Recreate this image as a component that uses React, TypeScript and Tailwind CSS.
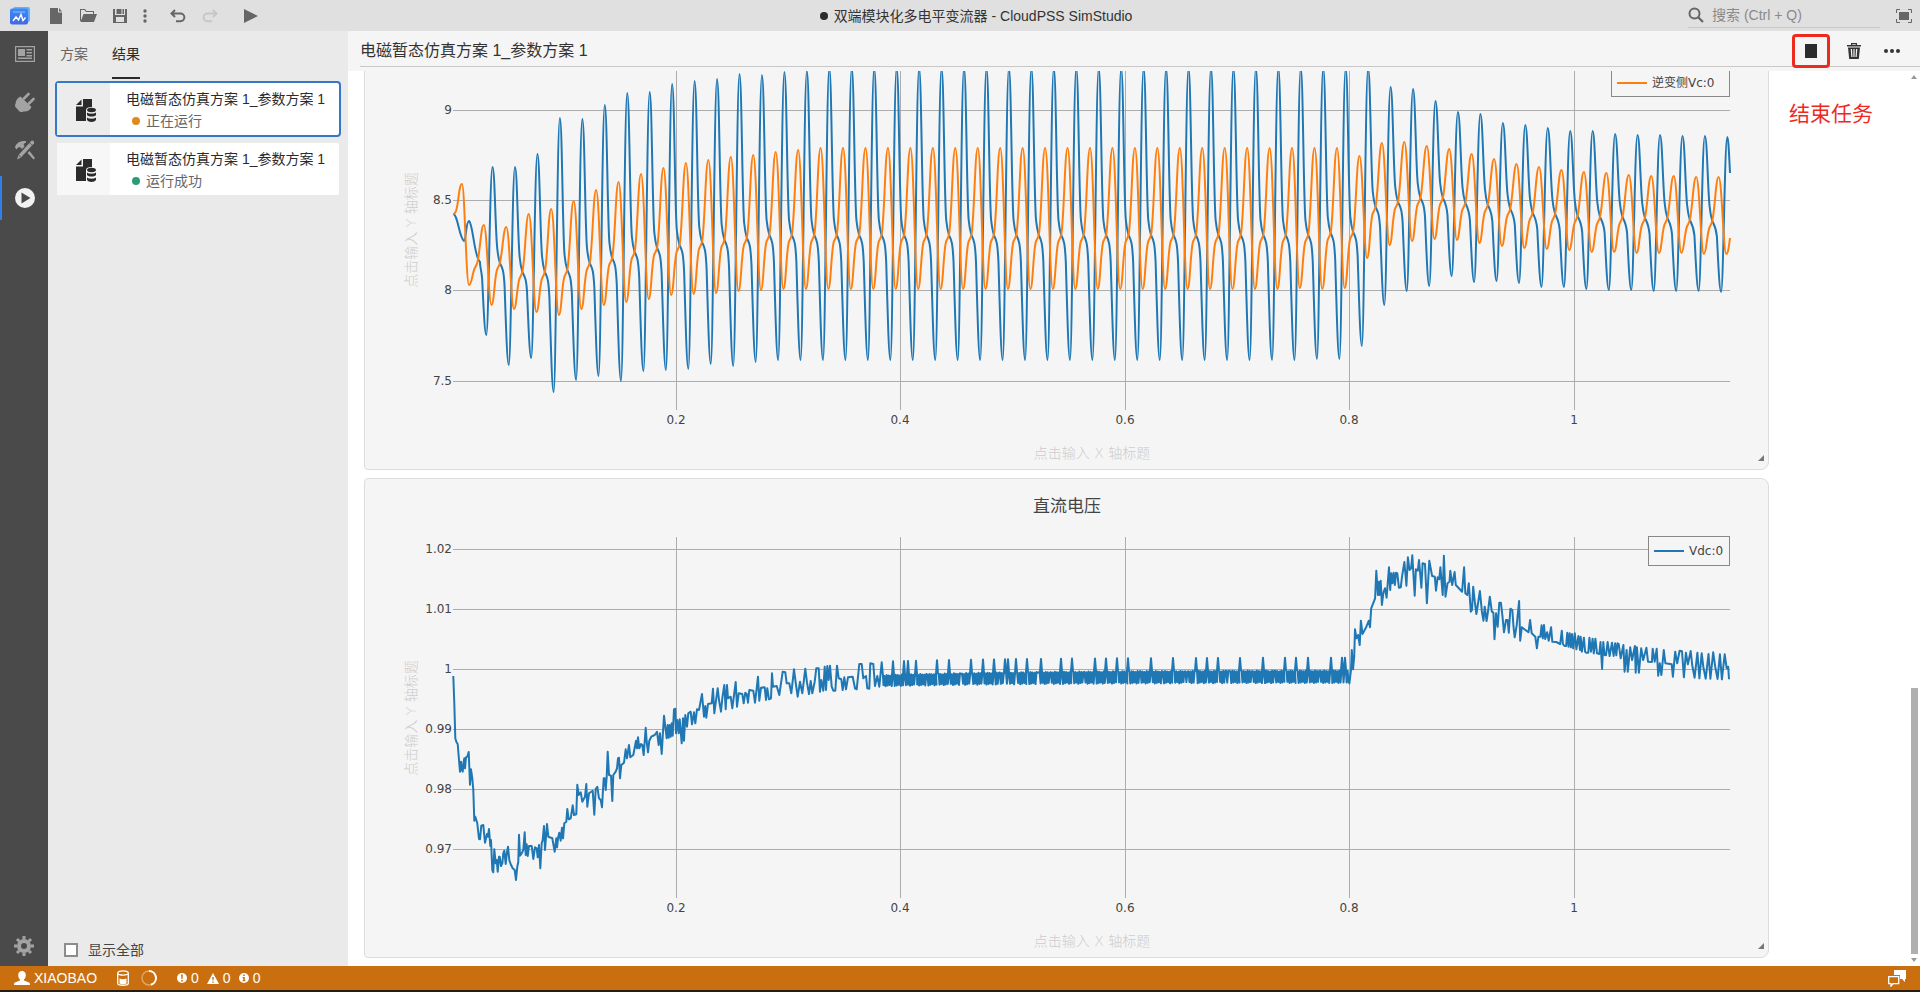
import type { ReactNode } from 'react';

type Point = [number, number];

const BLUE = '#1f77b4';
const ORANGE = '#ff7f0e';

// Plot area inside a chart card
const PLOT = { left: 88, right: 1365, top: 58, bottom: 419 };

const X_TICKS = [
  { label: '0.2', x: 311 },
  { label: '0.4', x: 535 },
  { label: '0.6', x: 760 },
  { label: '0.8', x: 984 },
  { label: '1', x: 1209 },
];

/* ---------- capacitor voltage waveforms ---------- */

const PERIOD = 22.451;
const FIRST_PEAK = 127.5;
const LAST = 55;

const fill = (value: number, count: number) => Array<number>(count).fill(value);

const vcBlue = {
  peaks: [
    176, 176, 163, 127, 128, 114, 102, 101, 93, 90, 88, 83, 84, 81, 80, ...fill(77, 25),
    96, 98, 110, 121, 123, 132, 134, 137, 140, 140, 143, 144, 144, 145, 145, 146,
  ],
  troughs: [
    344, 374, 367, 401, 389, 385, 390, 380, 379, 378, 373, 375, 371, ...fill(369, 24),
    368, 368, 355, 314, 300, 295, 285, 291, 290, 292, 296, 296, 298, 299, 299, 300, 300, 300, 301,
  ],
};

// Values for the cycle before the first full peak come first
const knees = [
  271, 272, 281, 281, 279, 272, 267, 261, 257, 254, 251, 249, 247, ...fill(244, 24),
  244, 242, 241, 216, 211, 207, 207, 212, 214, 218, 222, 223, 225, 226, 226, 227, 227, 229, 230,
];

const vcOrange = {
  peaks: [
    193, 234, 236, 223, 218, 210, 199, 191, 183, 177, 172, 169, 166, 164, 161, 159, ...fill(157, 22),
    157, 157, 165, 152, 151, 155, 158, 163, 168, 173, 176, 179, 181, 182, 184, 185, 185, 186, 186,
  ],
  troughs: [
    294, 314, 318, 321, 324, 318, 314, 311, 308, 304, 303, 302, 300, 299, ...fill(298, 23),
    297, 298, 297, 267, 254, 250, 248, 249, 252, 255, 257, 258, 259, 261, 261, 262, 262, 262, 263, 263,
  ],
};

function bluePath() {
  let d = 'M88 223C93 223 94 247 99 250C101 250 101 230 104 230C108 232 109 266 115 271';
  for (let k = 0; k <= LAST; k++) {
    const x = FIRST_PEAK + k * PERIOD;
    const peak = vcBlue.peaks[k];
    const trough = vcBlue.troughs[k];
    const before = knees[k];
    const mid = before + (trough - before) * 0.22;
    const steep = before + (trough - before) * 0.6;
    // short ledge after the knee, then the steep fall into the trough
    d += `C${x - 12.6} ${before + 5} ${x - 11.4} ${before + 6} ${x - 10.4} ${mid}`;
    d += `C${x - 9} ${steep} ${x - 7.8} ${trough} ${x - 6.2} ${trough}`;
    d += `C${x - 4} ${trough} ${x - 2.6} ${peak} ${x} ${peak}`;
    if (k < LAST) {
      const knee = knees[k + 1];
      d += `C${x + 2.2} ${peak} ${x + 2.8} ${knee - 34} ${x + 4.7} ${knee - 15}`;
      d += `C${x + 5.3} ${knee - 9} ${x + 6.2} ${knee - 4} ${x + 7.4} ${knee}`;
    }
  }
  return d + 'C1363.4 146 1364.2 166 1365 182';
}

function orangePath() {
  let d = 'M88 223C94 224 93 193 97 193';
  for (let i = 0; i <= LAST + 1; i++) {
    const x = FIRST_PEAK + (i - 1) * PERIOD;
    const trough = vcOrange.troughs[i];
    d += `C${x - 5.4} ${vcOrange.peaks[i]} ${x - 4} ${trough} ${x - 1} ${trough}`;
    if (i <= LAST) {
      const knee = knees[i];
      const next = vcOrange.peaks[i + 1];
      d += `C${x + 1.6} ${trough} ${x + 2} ${knee + 12} ${x + 4.8} ${knee + 6}`;
      d += `C${x + 5.8} ${knee + 4} ${x + 6.6} ${knee + 3} ${x + 7.4} ${knee}`;
      d += `C${x + 10.2} ${knee - 12} ${x + 11} ${next} ${x + 13.8} ${next}`;
    }
  }
  return d + 'C1363 263 1364 255 1365 247';
}

/* ---------- DC voltage trace ---------- */

const START_UP = `310,618 313,700 316,805 319,815 323,822 327,870 330,905 333,875 336,900 338,905 341,875 343,865
345,895 348,862 352,860 356,846 360,944 363,898 367,925 370,960 373,1052 376,1040 382,1060 387,1107 390,1108
394,1067 400,1065 405,1118 411,1092 414,1100 417,1077 421,1128 423,1110 427,1200 430,1207 433,1138 437,1180
440,1170 443,1205 447,1160 449,1160 453,1188 457,1180 460,1150 463,1142 467,1182 471,1145 474,1130 478,1170
482,1183 488,1195 494,1200 498,1230 502,1190 505,1175 507,1094 510,1157 515,1150 520,1140 524,1087 527,1155
530,1123 533,1158 537,1128 545,1128 550,1167 555,1132 560,1135 563,1162 567,1125 571,1195 575,1120 578,1110
582,1068 585,1140 591,1062 595,1100 607,1105 614,1145 619,1105 621,1132 625,1100 628,1088 632,1112 636,1073
639,1105 643,1060 649,1055 652,1017 656,1048 662,1045 668,1006 672,1035 679,1033 682,944 686,975 692,967
697,995 705,980 709,942 712,1010 717,970 728,962 733,1034 737,957 742,950 747,985 752,990 756,1012 761,925
764,925 767,960 770,920 773,845 777,915 783,917 787,993 790,915 797,905 801,895 804,865 807,863 810,925
814,885 822,878 827,838 831,865 837,825 841,862 850,855 858,812 861,835 864,802 868,835 873,822 877,825
881,855 887,773 890,815 894,847 898,812 904,800 914,795 921,785 926,825 930,790 935,852 938,800 942,737
946,770 950,805 953,765 956,803 959,765 962,800 965,760 968,797 972,718 976,716 978,790 982,750 986,790
989,748 995,820 999,745 1002,812 1006,735 1011,770 1015,730 1022,725 1026,763 1032,727 1036,760 1041,718
1047,720 1056,672 1062,740 1066,708 1069,743 1074,702 1085,700 1089,656 1093,730 1098,692 1103,655 1107,690
1113,725 1117,685 1123,645 1127,718 1131,645 1134,685 1142,680 1147,715 1157,636 1161,710 1166,670 1177,672
1181,700 1186,668 1190,672 1194,698 1198,660 1210,662 1215,698 1220,655 1224,620 1228,692 1233,653 1244,652
1248,690 1252,655 1257,688`;

const SETTLING = `93,205 96,130 99,170 110,168 118,195 128,125 136,127 140,160 148,160 154,190 162,118 168,165
173,200 180,155 187,190 196,116 201,158 207,192 212,153 217,190 224,155 229,115 236,115 240,185 244,150
250,182 254,110 258,180 262,108 266,150 270,107 275,170 280,182 286,182 291,107 296,145 304,148 308,180
313,142 318,178 324,142 338,140 345,175 350,178 358,102 365,102 370,145 378,138 382,175 388,176 391,100
400,102 405,168 412,138 418,170 425,97 429,138`;

const OVERSHOOT = `125,640 129,600 131,540 134,598 137,560 139,478 143,505 147,495 151,525 154,452 158,492 168,470
174,452 177,472 180,415 190,385 193,302 197,375 199,335 201,375 204,332 207,405 211,368 215,355 219,383
225,292 228,360 231,310 234,340 237,308 240,345 243,308 246,310 250,353 255,352 258,320 264,276 269,347
273,262 277,300 281,295 284,256 290,377 293,298 298,302 301,270 307,353 310,280 316,282 321,400 327,272
334,318 341,320 344,362 348,322 352,328 355,292 361,375 364,257 368,380 373,340 378,335 380,302 385,345
391,306 394,345 410,365 415,292 418,370 423,375 427,340 432,425 435,420 438,350 442,395 446,432 455,363
460,425 464,452 467,410 472,453 476,420 480,380 485,425 489,428 492,508 496,430 500,470 504,398 508,398
512,440 516,487 521,450 525,450 528,488 532,416 537,420 540,470 543,502 548,466 554,393 557,512 561,472
570,480 578,487 582,450 586,490 595,500 599,535 603,500 608,500 611,466 614,505 617,465 620,507 625,487
629,512 635,472 638,515 648,516 658,522 662,482 665,522 669,528 673,528 676,488 679,530 682,490 685,532
688,492 691,535 695,490 699,538 704,498 708,540 710,500 713,545 718,503 721,545 724,548 729,548 732,503
736,545 740,506 743,550 747,506 751,550 757,552 760,516 764,597 767,516 770,555 774,556 778,516 783,558
789,518 793,558 797,520 800,556 803,520 806,522 811,565 818,525 821,605 826,540 829,605 835,532 840,570
847,528 849,608 852,532 857,608 863,535 868,570 876,533 880,575 890,576 892,536 897,575 902,536 906,617
910,580 914,615 920,540 924,580 940,583 943,620 949,545 954,580 960,542 966,544 971,622 976,548 981,583
988,543 992,585 998,623 1005,548 1010,625 1016,550 1020,590 1026,626 1033,552 1038,626 1045,547 1050,590
1056,627 1062,553 1067,628 1074,553 1079,595 1083,590 1085,628`;

const SPIKES = [
  528, 539, 543, 551, 572, 584, 606, 618, 629, 640, 643, 651, 662, 676, 696, 707, 730, 741, 752, 763, 786, 808,
  831, 842, 853, 875, 898, 920, 931, 943, 966, 977, 980,
];

function segment(samples: string, x0: number, y0: number, scale: number): Point[] {
  return samples.split(/\s+/).map((pair) => {
    const [x, y] = pair.split(',').map(Number);
    return [x0 + x / scale, y0 + y / 3];
  });
}

// Switching ripple just below the rated voltage, with a spike now and then
function steadyState(): Point[] {
  const points: Point[] = [];
  let next = 0;
  let low = false;
  for (let x = 518.5, i = 0; x < 984; x += 1.02, i++) {
    const drift = 5 * Math.exp(-(x - 518) / 150);
    const top = 191.2 + drift;
    if (next < SPIKES.length && x >= SPIKES[next]) {
      points.push([SPIKES[next] - 1, top], [SPIKES[next], 178.5 + drift * 0.8], [SPIKES[next] + 1, top]);
      next++;
      low = false;
      continue;
    }
    const flat = i % 11 > 8 || i % 37 === 3;
    low = !low && !flat;
    points.push([x, low ? 202.6 + drift * 0.7 + ((i * 7) % 3) * 0.6 : top + ((i * 5) % 3) * 0.4]);
  }
  return points;
}

const vdcPoints = [
  ...segment(START_UP, -15, -9, 3),
  ...segment(SETTLING, 375, 151, 3),
  ...steadyState(),
  ...segment(OVERSHOOT, 935, -9, 2.529),
]
  .map(([x, y]) => `${x.toFixed(1)},${y.toFixed(1)}`)
  .join(' ');

/* ---------- chart ---------- */

interface ChartProps {
  title?: string;
  yTicks: { label: string; y: number }[];
  children: ReactNode;
}

function Chart({ title, yTicks, children }: ChartProps) {
  return (
    <section className="relative shrink-0 rounded-l-sm rounded-r-lg border border-[#dcdcdc] bg-[#f5f5f5]">
      <svg
        viewBox="0 0 1403 478"
        className="block w-full font-['DejaVu_Sans','Noto_Sans_CJK_SC',sans-serif] text-[12px]"
        fill="#444"
      >
        {title && (
          <text x="702" y="33" textAnchor="middle" className="text-[17px]">
            {title}
          </text>
        )}
        <g stroke="#adadad" shapeRendering="crispEdges">
          {X_TICKS.map((tick) => (
            <line key={tick.label} x1={tick.x} x2={tick.x} y1={PLOT.top} y2={PLOT.bottom} />
          ))}
          {yTicks.map((tick) => (
            <line key={tick.label} x1={PLOT.left} x2={PLOT.right} y1={tick.y} y2={tick.y} />
          ))}
        </g>
        {X_TICKS.map((tick) => (
          <text key={tick.label} x={tick.x} y="433" textAnchor="middle">
            {tick.label}
          </text>
        ))}
        {yTicks.map((tick) => (
          <text key={tick.label} x="87" y={tick.y + 4} textAnchor="end">
            {tick.label}
          </text>
        ))}
        <g fill="#ccc" textAnchor="middle" className="text-[14px] font-light">
          <text x="727" y="467">点击输入 X 轴标题</text>
          <text transform="translate(51 239) rotate(-90)">点击输入 Y 轴标题</text>
        </g>
        {children}
      </svg>
      <svg viewBox="0 0 6 6" className="absolute right-1 bottom-2 size-1.5" fill="#777">
        <path d="M6 0v6H0z" />
      </svg>
    </section>
  );
}

/* ---------- icons ---------- */

interface IconProps {
  className?: string;
  box?: string;
  children: ReactNode;
}

function Icon({ className = 'size-5', box = '0 0 20 20', children }: IconProps) {
  return (
    <svg viewBox={box} className={`${className} shrink-0`} fill="currentColor" aria-hidden="true">
      {children}
    </svg>
  );
}

function Logo() {
  return (
    <Icon>
      <defs>
        <linearGradient id="logo" x1="0" y1="0" x2="0" y2="1">
          <stop offset="0" stopColor="#3d8bf5" />
          <stop offset="1" stopColor="#4368e0" />
        </linearGradient>
      </defs>
      <rect x="3" y="1" width="17" height="15" rx="2" fill="#62b2fb" />
      <rect x="0" y="2.5" width="18" height="16" rx="2" fill="url(#logo)" />
      <path d="M3 6h12" stroke="#8fc0ff" />
      <path d="m3 15 3-4 2.5 3L11 8.5l2 6 2.5-3" stroke="#fff" strokeWidth="1.4" fill="none" />
    </Icon>
  );
}

const toolbar = [
  {
    label: '新建',
    className: 'ml-5 w-3',
    box: '0 0 12 16',
    icon: <path d="M0 0h8v4.5h4V16H0zM9 0l3 3.5H9z" />,
  },
  {
    label: '打开',
    className: 'ml-[18px] w-[17px]',
    box: '0 0 17 16',
    icon: (
      <>
        <path d="M0 1h5l1.5 2H14v3h-1V4H6L4.5 2H1v11H0z" />
        <path d="M3.5 6H17l-3 8H.5z" />
      </>
    ),
  },
  {
    label: '保存',
    className: 'ml-4 w-3.5',
    box: '0 0 14 16',
    icon: <path fillRule="evenodd" d="M0 1h2v6h10V1h2v14H0zM3.5 1h5v5h-5zM9.5 1H11v5H9.5zM3 9h8v5H3z" />,
  },
  {
    label: '更多',
    className: 'ml-4 w-1',
    box: '0 0 4 16',
    icon: (
      <>
        <circle cx="2" cy="3" r="1.7" />
        <circle cx="2" cy="8" r="1.7" />
        <circle cx="2" cy="13" r="1.7" />
      </>
    ),
  },
];

const undoPath = 'M5 2 1.5 5.5 5 9M2 5.5h8.5a3.8 3.8 0 0 1 0 7.7H6';

const sidebar = [
  {
    label: '概要',
    icon: (
      <>
        <path fillRule="evenodd" d="M0 2h20v16H0zM1.2 3.2v13.6h17.6V3.2z" />
        <path d="M3 5h7v7H3zM11.5 5H17v1.5h-5.5zM11.5 8H17v1.5h-5.5zM11.5 11H17v1.5h-5.5zM3 13.5h14V15H3z" />
      </>
    ),
  },
  {
    label: '实现',
    icon: (
      <>
        <path d="M5.5 4.5 16.5 15c-1.500 3.500-4.500 5-8 4.500-1 .8-3 .8-4 0l-4-4.500c-.8-1-.8-2 0-3C.5 8.500 2.500 6 5.500 4.500z" />
        <path d="m9 6.500 4.500-4.500M14 11.500l4.500-4.500" stroke="currentColor" strokeWidth="2.6" strokeLinecap="round" />
      </>
    ),
  },
  {
    label: '工具',
    icon: (
      <>
        <path d="M0 7.500C1 3 5 .5 11 1v1.500L8.500 4l1 2.500L7 9 5 7l-2 .5L1.500 9.500zM12.500 13l2-2 5.500 7-1.500 1.500z" />
        <path d="M16.500.8c1.200-.8 3.200 1 2.500 2.400L6 17.500 2 19.500 3.500 15z" />
        <path d="m14.500 2.800 2.700 2.700M3.500 15 6 17.500" stroke="#4a4a4a" strokeWidth=".8" />
      </>
    ),
  },
  {
    label: '运行',
    active: true,
    icon: <path fillRule="evenodd" d="M10 0a10 10 0 1 0 0 20 10 10 0 0 0 0-20zM6.500 4.500l9 5.500-9 5.500z" />,
  },
];

const results = [
  { id: 1, name: '电磁暂态仿真方案 1_参数方案 1', status: '正在运行', dot: 'bg-[#e08a1e]', selected: true },
  { id: 2, name: '电磁暂态仿真方案 1_参数方案 1', status: '运行成功', dot: 'bg-[#2a9d78]', selected: false },
];

function TitleBar() {
  return (
    <header className="flex h-[31px] items-center bg-[#e0e0e0] text-[#666]">
      <div className="flex w-66 shrink-0 items-center pl-2.5">
        <Logo />
        {toolbar.map((item) => (
          <button key={item.label} aria-label={item.label} className={item.className}>
            <Icon className="h-4 w-full" box={item.box}>
              {item.icon}
            </Icon>
          </button>
        ))}
        <button aria-label="撤销" className="ml-[23px]">
          <Icon className="size-4" box="0 0 16 16">
            <path d={undoPath} fill="none" stroke="currentColor" strokeWidth="2" />
          </Icon>
        </button>
        <button aria-label="重做" disabled className="ml-4 text-[#c6c6c6]">
          <Icon className="size-4 -scale-x-100" box="0 0 16 16">
            <path d={undoPath} fill="none" stroke="currentColor" strokeWidth="2" />
          </Icon>
        </button>
        <button aria-label="运行" className="ml-[26px]">
          <Icon className="h-3.5 w-3.5" box="0 0 14 14">
            <path d="M0 0v14l14-7z" />
          </Icon>
        </button>
      </div>
      <div className="flex min-w-0 flex-1 items-center justify-center gap-1.5 text-[#333]">
        <span className="size-2 rounded-full bg-[#2b2b2b]" />
        <h1>双端模块化多电平变流器 - CloudPSS SimStudio</h1>
      </div>
      <div className="flex w-[232px] shrink-0 items-center justify-between pr-2">
        <label className="flex w-48 items-center gap-2 border-b border-[#c8c8c8]">
          <Icon className="size-4" box="0 0 16 16">
            <circle cx="6.500" cy="6.500" r="5" fill="none" stroke="currentColor" strokeWidth="2" />
            <path d="m10 10 5 5" stroke="currentColor" strokeWidth="2.2" />
          </Icon>
          <input
            type="search"
            aria-label="搜索"
            placeholder="搜索 (Ctrl + Q)"
            className="h-6 w-full bg-transparent outline-none placeholder:text-[#8a8a8a]"
          />
        </label>
        <button aria-label="全屏">
          <Icon className="size-4" box="0 0 16 16">
            <path d="M.5 5V1.500H4M12 1.500h3.500V5M15.500 11v3.500H12M4 14.500H.5V11" fill="none" stroke="currentColor" />
            <path d="M3 4h10v8H3z" />
          </Icon>
        </button>
      </div>
    </header>
  );
}

function Sidebar() {
  return (
    <nav className="flex w-12 shrink-0 flex-col gap-1 bg-[#4a4a4a] pt-px text-[#a3a3a3]">
      {sidebar.map((item) => (
        <button
          key={item.label}
          aria-label={item.label}
          className={`flex h-11 items-center justify-center border-l-2 ${
            item.active ? 'border-[#2f80ed] text-[#f2f2f2]' : 'border-transparent'
          }`}
        >
          <Icon>{item.icon}</Icon>
        </button>
      ))}
      <button aria-label="设置" className="mt-auto flex h-10 items-center justify-center">
        <Icon>
          <circle cx="10" cy="10" r="5" fill="none" stroke="currentColor" strokeWidth="4" />
          <g stroke="currentColor" strokeWidth="3">
            <path d="M10 0v3M10 17v3M0 10h3M17 10h3M3 3l2.200 2.200M14.800 14.800 17 17M17 3l-2.200 2.200M5.200 14.800 3 17" />
          </g>
        </Icon>
      </button>
    </nav>
  );
}

function ResultPanel() {
  return (
    <aside className="flex w-75 shrink-0 flex-col bg-[#eaeaea]">
      <div role="tablist" className="flex h-12 gap-6 px-3 text-[#666]">
        <button role="tab" className="border-b-2 border-transparent">
          方案
        </button>
        <button role="tab" aria-selected="true" className="border-b-2 border-[#2b2b2b] text-[#2b2b2b]">
          结果
        </button>
      </div>
      <ul className="mt-0.5 flex flex-1 flex-col gap-1 px-[7px]">
        {results.map((result) => (
          <li
            key={result.id}
            className={`flex h-14 rounded border-2 bg-clip-padding bg-white ${
              result.selected ? 'border-[#3579c6]' : 'border-transparent'
            }`}
          >
            <div
              className={`flex w-[53px] items-center justify-center pt-1 pl-1 text-[#2b2b2b] ${
                result.selected ? 'bg-[#ececec]' : 'bg-[#f7f7f7]'
              }`}
            >
              <Icon className="h-6 w-5" box="0 0 20 24">
                <path d="M7 0h9v8c-4 0-6 1-6 3v11H0V7.500h7zM5.500.5V6H0z" />
                <path d="M11 11c0-3 9-3 9 0s-9 3-9 0zM11 13.500c2 1.600 7 1.600 9 0V16c-1.500 2-7.500 2-9 0zM11 18.500c2 1.600 7 1.600 9 0V21c-1.500 2.500-7.500 2.500-9 0z" />
              </Icon>
            </div>
            <div className="min-w-0 flex-1 pt-[5px] pl-4 leading-[22px]">
              <p className="truncate text-[#2b2b2b]">{result.name}</p>
              <p className="flex items-center gap-1.5 pl-1.5 text-[#666]">
                <span className={`size-2 rounded-full ${result.dot}`} />
                {result.status}
              </p>
            </div>
          </li>
        ))}
      </ul>
      <label className="flex h-8 items-center gap-2.5 px-4 text-[#444]">
        <input type="checkbox" className="size-3.5 appearance-none border-2 border-[#8c8c8c] bg-white" />
        显示全部
      </label>
    </aside>
  );
}

function ResultView() {
  return (
    <main className="relative flex min-w-0 flex-1 flex-col bg-white">
      <div className="h-10 bg-[#f5f5f5] pl-3">
        <div className="flex h-9 items-center border-b border-[#c8c8c8] pt-1 pr-5 text-[#333]">
          <h2 className="flex-1 text-base">电磁暂态仿真方案 1_参数方案 1</h2>
          <button
            aria-label="结束"
            className="flex h-[34px] w-[38px] items-center justify-center rounded border-3 border-[#ee2a1e]"
          >
            <span className="h-3.5 w-3 bg-[#2b2b2b]" />
          </button>
          <button aria-label="删除" className="ml-4 w-4">
            <Icon className="size-4" box="0 0 16 16">
              <path d="M1 2h4V0h6v2h4v1.500H1zM6.200 1.200V2h3.600v-.8z" fillRule="evenodd" />
              <path
                fillRule="evenodd"
                d="M2 4.500h12L12.800 16H3.200zM4.700 6l.6 8h1.200L6 6zM7.400 6v8h1.200V6zM10 6l-.5 8h1.200l.6-8z"
              />
            </Icon>
          </button>
          <button aria-label="更多" className="ml-[22px]">
            <Icon className="size-4" box="0 0 16 16">
              <circle cx="2" cy="8" r="2" />
              <circle cx="8" cy="8" r="2" />
              <circle cx="14" cy="8" r="2" />
            </Icon>
          </button>
        </div>
      </div>

      <div className="flex min-h-0 flex-1">
        <div className="flex min-w-0 flex-1 flex-col justify-end gap-2 overflow-hidden pr-[142px] pb-2 pl-4">
          <Chart
            yTicks={[
              { label: '9', y: 119 },
              { label: '8.5', y: 209 },
              { label: '8', y: 299 },
              { label: '7.5', y: 390 },
            ]}
          >
            <g fill="none" strokeWidth="2" strokeLinejoin="round">
              <path d={bluePath()} stroke={BLUE} />
              <path d={orangePath()} stroke={ORANGE} />
            </g>
            <rect x="1246.5" y="57.5" width="118" height="48" fill="#f5f5f5" stroke="#888" />
            <path d="M1252 92h30" stroke={ORANGE} strokeWidth="2" />
            <text x="1287" y="96">逆变侧Vc:0</text>
          </Chart>
          <Chart
            title="直流电压"
            yTicks={[
              { label: '1.02', y: 70 },
              { label: '1.01', y: 130 },
              { label: '1', y: 190 },
              { label: '0.99', y: 250 },
              { label: '0.98', y: 310 },
              { label: '0.97', y: 370 },
            ]}
          >
            <polyline points={vdcPoints} fill="none" stroke={BLUE} strokeWidth="2" strokeLinejoin="round" />
            <rect x="1283.5" y="57.5" width="81" height="29" fill="#f5f5f5" stroke="#888" />
            <path d="M1289 72h30" stroke={BLUE} strokeWidth="2" />
            <text x="1324" y="76">Vdc:0</text>
          </Chart>
        </div>
        {/* Scrollbar */}
        <div className="flex w-[9px] flex-col pt-1 pb-1 text-[#999]">
          <Icon className="h-1 w-1.5" box="0 0 6 4">
            <path d="M0 4h6L3 0z" />
          </Icon>
          <div className="mt-auto mb-1 h-[30%] w-[7px] bg-[#b0b0b0]" />
          <Icon className="h-1 w-1.5" box="0 0 6 4">
            <path d="M0 0h6L3 4z" />
          </Icon>
        </div>
      </div>

      <p className="absolute top-[67px] right-[47px] text-[21px] leading-8 text-[#ee2a1e]">结束任务</p>
    </main>
  );
}

function StatusBar() {
  return (
    <footer className="flex h-[26px] items-center border-b-2 border-[#241c0e] bg-[#ca6f10] px-3.5 text-white">
      <button className="flex items-center gap-1">
        <Icon className="size-4" box="0 0 16 16">
          <path d="M8 1c2.500 0 3.800 1.800 3.800 4.200 0 1.800-.8 3.300-1.800 4.200v1.100l5 2c.7.3 1 1 1 2.500H0c0-1.500.3-2.200 1-2.500l5-2V9.400C5 8.500 4.200 7 4.200 5.200 4.200 2.800 5.500 1 8 1z" />
        </Icon>
        XIAOBAO
      </button>
      <Icon className="ml-5 h-4 w-3" box="0 0 12 16">
        <path
          d="M.7 3v10.500c0 2.300 10.600 2.300 10.600 0V3M.7 3c0-2.800 10.600-2.800 10.600 0S.7 5.800.7 3z"
          fill="none"
          stroke="currentColor"
          strokeWidth="1.3"
        />
        <path d="M2.500 8.500c2 1 5 1 7 0v5c-2 1-5 1-7 0z" />
      </Icon>
      <Icon className="ml-3 size-4" box="0 0 16 16">
        <circle cx="8" cy="8" r="7" fill="none" stroke="#e0a55f" strokeWidth="1.5" />
        <path d="M8 1a7 7 0 0 1 2 13.700" fill="none" stroke="currentColor" strokeWidth="2" />
      </Icon>
      <span className="ml-5 flex items-center gap-1">
        <Icon className="size-2.5" box="0 0 10 10">
          <circle cx="5" cy="5" r="5" />
          <path d="M4.100 1.500h1.800L5.600 6H4.400zM4.200 7h1.600v1.500H4.200z" fill="#ca6f10" />
        </Icon>
        0
      </span>
      <span className="ml-2 flex items-center gap-1">
        <Icon className="h-[11px] w-3" box="0 0 12 11">
          <path d="m6 0 6 11H0z" />
          <path d="M5.200 4h1.600l-.3 3.500h-1zM5.300 8.500h1.400v1.300H5.300z" fill="#ca6f10" />
        </Icon>
        0
      </span>
      <span className="ml-2 flex items-center gap-1">
        <Icon className="size-2.5" box="0 0 10 10">
          <circle cx="5" cy="5" r="5" />
          <path d="M4.200 1.500h1.600V3H4.200zM3.500 4h2.300v3.200h.7v1h-3v-1h.7V5h-.7z" fill="#ca6f10" />
        </Icon>
        0
      </span>
      <button aria-label="消息" className="ml-auto">
        <Icon className="h-[17px] w-[18px]" box="0 0 18 17">
          <path d="M6 0h12v9h-1v3l-3-3h-2V5H6z" />
          <path d="M.7 6.700h10v7H5l-2 2.300v-2.300H.7z" fill="none" stroke="currentColor" strokeWidth="1.3" />
        </Icon>
      </button>
    </footer>
  );
}

export default function App() {
  return (
    <div className="flex h-screen flex-col overflow-hidden font-['Liberation_Sans','Noto_Sans_CJK_SC',sans-serif] text-sm">
      <TitleBar />
      <div className="flex min-h-0 flex-1">
        <Sidebar />
        <ResultPanel />
        <ResultView />
      </div>
      <StatusBar />
    </div>
  );
}
